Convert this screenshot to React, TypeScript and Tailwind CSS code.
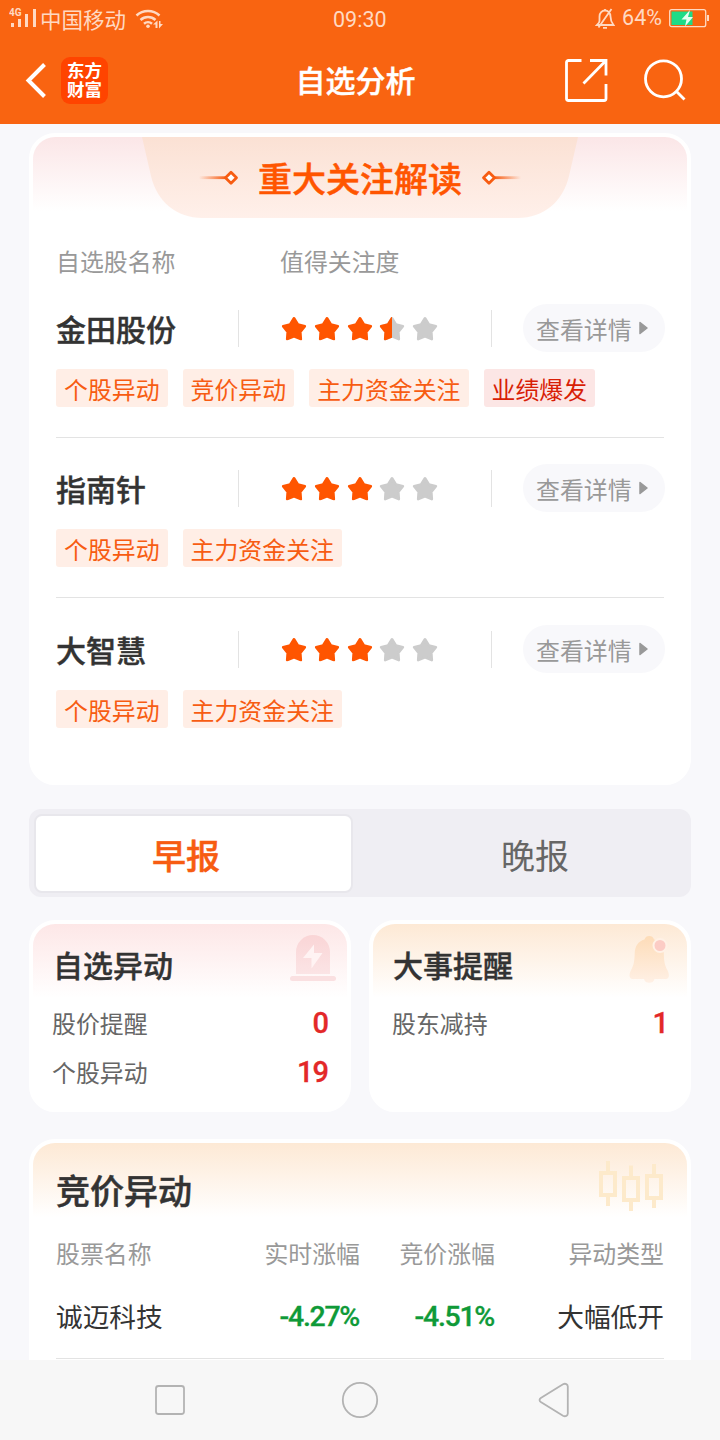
interface Stock {
  name: string;
  score: number;
  tags: { label: string; hot?: boolean }[];
}

const stocks: Stock[] = [
  {
    name: "金田股份",
    score: 3.5,
    tags: [
      { label: "个股异动" },
      { label: "竞价异动" },
      { label: "主力资金关注" },
      { label: "业绩爆发", hot: true },
    ],
  },
  { name: "指南针", score: 3, tags: [{ label: "个股异动" }, { label: "主力资金关注" }] },
  { name: "大智慧", score: 3, tags: [{ label: "个股异动" }, { label: "主力资金关注" }] },
];

const STAR =
  "M13 2.300L16.900 8.500 23.900 10.200 19.300 15.800 19.800 23.100 13 20.400 6.200 23.100 6.700 15.800 2.100 10.200 9.100 8.500z";

function Star({ fill }: { fill: number }) {
  return (
    <svg width="26" height="26" viewBox="0 0 26 26">
      {fill < 1 && <path d={STAR} fill="#cccccc" stroke="#cccccc" strokeWidth="2.600" strokeLinejoin="round" />}
      {fill > 0 && (
        <g style={{ clipPath: `inset(0 ${(1 - fill) * 100}% 0 0)` }}>
          <path d={STAR} fill="#ff5500" stroke="#ff5500" strokeWidth="2.600" strokeLinejoin="round" />
        </g>
      )}
    </svg>
  );
}

function StatusBar() {
  return (
    <div className="flex h-[38px] items-center pl-[9px] pr-[11px] text-[#ffd9c2]">
      <svg className="-translate-y-px" width="28" height="20" viewBox="0 0 28 20" fill="currentColor">
        <text x="0" y="8" fontSize="10" fontWeight="700" fontFamily="Roboto, sans-serif">
          4G
        </text>
        <rect x="2" y="15" width="3" height="4" />
        <rect x="9" y="11" width="3" height="8" />
        <rect x="16" y="6" width="3" height="13" />
        <rect x="24" y="1" width="3" height="18" />
      </svg>
      <span className="ml-[3px] pt-[3px] text-[21.5px] leading-none">中国移动</span>
      <svg className="ml-[9px]" width="29" height="20" viewBox="0 0 29 20" fill="none" stroke="currentColor" strokeWidth="2.500">
        <path d="M1.500 6.500a17 17 0 0 1 23 0" />
        <path d="M5.500 11a11 11 0 0 1 15 0" />
        <path d="M9 14.800a6 6 0 0 1 8 0" />
        <circle cx="13" cy="17.300" r="1.800" fill="currentColor" stroke="none" />
        <path d="M18 15.500L22.500 11.500V19H20.500V15.500zM24 12H25.500V15H28L24 19.500z" fill="currentColor" stroke="none" />
      </svg>
      <span className="ml-[169px] pt-[1px] text-[21.5px] leading-none">09:30</span>
      <div className="-mt-[2px] ml-auto flex items-center">
        <svg width="20" height="21" viewBox="0 0 20 21" fill="none" stroke="currentColor" strokeWidth="1.800">
          <path d="M4.500 13V8.500C4.500 5 7 2.500 10 2.500s5.500 2.500 5.500 6c0 4 1 6 3 8.500H2c1.500-1.500 2.500-2.500 2.500-4M8 19.800h4M10 1v2M16.500 1L3.500 19.500" />
        </svg>
        <span className="ml-[7px] text-[21.5px] leading-none">64%</span>
        <svg className="ml-[7px]" width="40" height="20" viewBox="0 0 40 20">
          <rect x=".7" y="1.700" width="36" height="17" rx="2" fill="none" stroke="currentColor" strokeWidth="1.300" />
          <rect x="2.500" y="3.500" width="21" height="13.500" fill="#1edb87" />
          <path d="M21 2l-8.500 9.500h5L16 18.500l8-9.500h-5z" fill="#e6fff2" />
          <rect x="38" y="7" width="2" height="6" fill="currentColor" />
        </svg>
      </div>
    </div>
  );
}

function NavBar() {
  return (
    <div className="grid h-[84px] grid-cols-[1fr_auto_1fr] items-center pl-[24px] pr-[33px] text-white">
      <div className="flex items-center">
        <svg width="24" height="38" viewBox="0 0 24 38" fill="none" stroke="currentColor" strokeWidth="4">
          <path d="M20.500 3.500L4.500 19.500l16 16" />
        </svg>
        <div className="ml-[13px] flex h-[47px] w-[47px] flex-col items-center justify-center rounded-[9px] bg-[#ff4400] pt-[2px] text-[17.500px] font-bold leading-[19px]">
          <span>东方</span>
          <span>财富</span>
        </div>
      </div>
      <h1 className="pt-[4px] text-[30px] font-medium leading-none [-webkit-text-stroke:0.4px]">自选分析</h1>
      <div className="flex items-center justify-end">
        <svg width="44" height="44" viewBox="0 0 44 44" fill="none" stroke="currentColor" strokeWidth="2.800">
          <path d="M17.500 2.500H4.500a2 2 0 0 0-2 2v36a2 2 0 0 0 2 2h35.500a2 2 0 0 0 2-2V26M26 2.500h16V17.500M41.500 3L19.500 25.500" />
        </svg>
        <svg className="ml-[35px]" width="44" height="44" viewBox="0 0 44 44" fill="none" stroke="currentColor" strokeWidth="2.800">
          <circle cx="20.500" cy="20.800" r="18" />
          <path d="M33.500 33.500l8 8" />
        </svg>
      </div>
    </div>
  );
}

function Ornament({ flip }: { flip?: boolean }) {
  return (
    <svg className={flip ? "-scale-x-100" : ""} width="40" height="16" viewBox="0 0 40 16">
      <defs>
        <linearGradient id="tail" x1="0" x2="1">
          <stop offset="0" stopColor="#f75c12" stopOpacity="0" />
          <stop offset="1" stopColor="#f75c12" />
        </linearGradient>
      </defs>
      <rect x="0" y="6.300" width="27" height="2.800" fill="url(#tail)" />
      <path d="M32 2.200L37.500 7.700 32 13.200 26.500 7.700z" fill="#fff" stroke="#f75c12" strokeWidth="2.800" strokeLinejoin="round" />
    </svg>
  );
}

function FocusCard() {
  return (
    <section className="h-[652px] rounded-[26px] border-4 border-white bg-white">
      <div className="h-[81px] rounded-t-[22px] bg-linear-to-b from-[#fbe6e7] to-white to-[74px]">
        <div className="relative mx-auto h-[81px] w-[436px]">
          <svg className="absolute inset-0" width="436" height="81" viewBox="0 0 436 81">
            <defs>
              <linearGradient id="banner" x1="0" y1="0" x2="0" y2="1">
                <stop offset="0" stopColor="#fbe1d4" />
                <stop offset="1" stopColor="#fff0ea" />
              </linearGradient>
            </defs>
            <path d="M0 0H436L427 39C421 65 401 81 376 81H60C35 81 15 65 9 39Z" fill="url(#banner)" />
          </svg>
          <div className="relative flex h-[81px] items-center justify-center gap-[19px]">
            <Ornament />
            <h2 className="pt-[5px] text-[34px] font-medium leading-none text-[#ff5500] [-webkit-text-stroke:0.5px]">重大关注解读</h2>
            <Ornament flip />
          </div>
        </div>
      </div>
      <div className="px-[23px]">
        <div className="flex h-[86px] items-center pt-[6px] text-[23.900px] text-[#999999]">
          <span className="w-[224px]">自选股名称</span>
          <span>值得关注度</span>
        </div>
        {stocks.map((stock) => (
          <div key={stock.name} className="mb-[27px] h-[134px] border-b border-[#e3e3e3] last:border-0 nth-2:mb-[26px]">
            <div className="-mr-px flex h-12 items-center">
              <span className="w-[182px] pt-[5px] text-[30px] font-medium leading-none text-[#333333] [-webkit-text-stroke:0.4px]">
                {stock.name}
              </span>
              <div className="h-[37px] w-px bg-[#e3e3e3]" />
              <div className="ml-[42px] flex w-[210px] gap-[6.800px] pt-[2px]">
                {[0, 1, 2, 3, 4].map((i) => (
                  <Star key={i} fill={Math.min(1, Math.max(0, stock.score - i))} />
                ))}
              </div>
              <div className="h-[37px] w-px bg-[#e3e3e3]" />
              <button className="ml-auto flex h-12 w-[142px] items-center rounded-full bg-[#f8f8fb] pl-[13px] text-[23.900px] text-[#999999]">
                <span className="pt-[7px]">查看详情</span>
                <svg className="ml-[7px]" width="9" height="14" viewBox="0 0 9 14">
                  <path d="M1 1.500L8 7 1 12.500z" fill="#999" stroke="#999" strokeWidth="1.500" strokeLinejoin="round" />
                </svg>
              </button>
            </div>
            <div className="mt-[17px] flex gap-[15px]">
              {stock.tags.map((tag) => (
                <span
                  key={tag.label}
                  className={`h-[38px] rounded-[3px] px-2 text-[23.900px] leading-[45px] ${
                    tag.hot ? "bg-[#fce6e5] text-[#d81e06]" : "bg-[#ffeee6] text-[#f75c12]"
                  }`}
                >
                  {tag.label}
                </span>
              ))}
            </div>
          </div>
        ))}
      </div>
    </section>
  );
}

function Tabs() {
  return (
    <div className="mt-6 flex h-[88px] rounded-[12px] bg-[#efeef3] p-[6px] text-[34px]">
      <button className="-ml-px -mt-px h-[79px] w-[319px] rounded-[8px] border-2 border-[#e8e7ec] bg-white pr-[15px] pt-[6px] font-medium leading-none text-[#f75c12] [-webkit-text-stroke:0.5px]">
        早报
      </button>
      <button className="flex-1 pl-[32px] pt-[8px] leading-none text-[#666666]">晚报</button>
    </div>
  );
}

function SirenIcon() {
  return (
    <svg className="translate-x-[2px]" width="46" height="48" viewBox="0 0 46 48">
      <defs>
        <linearGradient id="siren" x1="0" y1="0" x2="0" y2="1">
          <stop offset="0" stopColor="#fad5d6" />
          <stop offset="1" stopColor="#fbe4e5" />
        </linearGradient>
      </defs>
      <path d="M6 39V17a17 17 0 0 1 34 0v22z" fill="url(#siren)" />
      <rect x="0" y="41" width="46" height="5" rx="2.500" fill="#fae0e1" />
      <path d="M24 9.500L13 23h8.500V33.500L32.500 18H24z" fill="#fff3f3" />
    </svg>
  );
}

function BellIcon() {
  return (
    <svg className="-translate-x-[4px]" width="41" height="50" viewBox="0 0 41 50">
      <defs>
        <linearGradient id="bell" x1="0" y1="0" x2="0" y2="1">
          <stop offset="0" stopColor="#fddcb8" />
          <stop offset="1" stopColor="#fff0e5" />
        </linearGradient>
      </defs>
      <path
        d="M15.500 4.500a5 5 0 0 1 9.500 0c6.500 2 9.500 6.500 9.800 14 .2 8 .9 12 3.800 17 2 4 1.800 8.500-1.800 8.500H25.500a5.500 5.500 0 0 1-10.500 0H3.500C0 44-.2 39.500 1.800 35.500 4.700 30.500 5.500 26.500 5.700 18.500 6 11 9 6.500 15.500 4.500z"
        fill="url(#bell)"
      />
      <circle cx="31" cy="10.500" r="6.500" fill="#fcccc5" stroke="#fff1e6" strokeWidth="2" />
    </svg>
  );
}

function CandlesIcon() {
  return (
    <svg className="-translate-y-px" width="66" height="52" viewBox="0 0 66 52" fill="none" stroke="#fdeacb" strokeWidth="4">
      <rect x="3" y="13" width="14" height="22" />
      <path d="M10 1v11M10 36v10" />
      <rect x="26" y="18" width="14" height="22" />
      <path d="M33 5.500V17M33 41v10" />
      <rect x="49" y="16" width="14" height="22" />
      <path d="M56 4v11M56 39v9" />
    </svg>
  );
}

interface SummaryCardProps {
  title: string;
  tint: string;
  icon: React.ReactNode;
  rows: [string, string][];
}

function SummaryCard({ title, tint, icon, rows }: SummaryCardProps) {
  return (
    <section className="h-[192px] flex-1 rounded-[26px] border-4 border-white bg-white">
      <div className={`h-full rounded-[22px] bg-linear-to-b ${tint} to-white to-[74px] pl-[19px] pr-[19px]`}>
        <div className="-mr-[6px] flex h-[74px] items-start justify-between pt-[11px]">
          <h3 className="pl-px pt-[17px] text-[30px] font-medium leading-none text-[#333333] [-webkit-text-stroke:0.4px]">{title}</h3>
          {icon}
        </div>
        {rows.map(([label, count]) => (
          <div key={label} className="flex h-[49px] items-center justify-between">
            <span className="pt-[7px] text-[23.900px] leading-none text-[#666666]">{label}</span>
            <span className="pt-[2px] text-[29px] font-medium leading-none tracking-[-1px] text-[#e32828] [-webkit-text-stroke:0.3px]">
              {count}
            </span>
          </div>
        ))}
      </div>
    </section>
  );
}

function AuctionCard() {
  return (
    <section className="mt-[27px] h-[260px] rounded-[26px] border-4 border-white bg-white">
      <div className="rounded-t-[22px] bg-linear-to-b from-[#fde9d5] to-white to-[74px] px-[23px]">
        <div className="flex h-[86px] items-start justify-between pt-[18px]">
          <h3 className="pt-[14px] text-[34px] font-medium leading-none text-[#333333] [-webkit-text-stroke:0.5px]">竞价异动</h3>
          <CandlesIcon />
        </div>
        <div className="grid grid-cols-[168px_136px_135px_1fr] pt-[15px] text-right text-[23.900px] leading-none text-[#999999]">
          <span className="text-left">股票名称</span>
          <span>实时涨幅</span>
          <span>竞价涨幅</span>
          <span>异动类型</span>
        </div>
        <div className="mt-[20px] grid h-[71px] grid-cols-[168px_136px_135px_1fr] items-center border-b border-[#e3e3e3] pb-[9px] text-right text-[26.700px] leading-none text-[#333333]">
          <span className="text-left">诚迈科技</span>
          <span className="-mt-[3px] pr-px text-[28.500px] font-medium tracking-[-1.300px] text-[#0f9a38] [-webkit-text-stroke:0.3px]">-4.27%</span>
          <span className="-mt-[3px] pr-px text-[28.500px] font-medium tracking-[-1.300px] text-[#0f9a38] [-webkit-text-stroke:0.3px]">-4.51%</span>
          <span>大幅低开</span>
        </div>
      </div>
    </section>
  );
}

export default function App() {
  return (
    <div className="flex h-[1440px] w-[720px] flex-col overflow-hidden bg-[#f8f8fb] font-[Roboto,'Noto_Sans_CJK_SC',sans-serif]">
      <header className="h-[124px] shrink-0 bg-[#f96411]">
        <StatusBar />
        <NavBar />
      </header>

      <main className="h-[1236px] shrink-0 overflow-hidden px-[29px] pt-[9px]">
        <FocusCard />
        <Tabs />
        <div className="mt-[23px] flex gap-[18px]">
          <SummaryCard
            title="自选异动"
            tint="from-[#fde7e7]"
            icon={<SirenIcon />}
            rows={[
              ["股价提醒", "0"],
              ["个股异动", "19"],
            ]}
          />
          <SummaryCard title="大事提醒" tint="from-[#fde9d5]" icon={<BellIcon />} rows={[["股东减持", "1"]]} />
        </div>
        <AuctionCard />
      </main>

      {/* system navigation */}
      <footer className="flex h-20 shrink-0 items-center bg-[#f7f7f7] pl-[154px]">
        <svg width="32" height="32" viewBox="0 0 32 32" fill="none" stroke="#b3b3b3" strokeWidth="1.800">
          <rect x="2" y="2" width="28" height="28" rx="2.500" />
        </svg>
        <svg className="ml-[155px]" width="38" height="38" viewBox="0 0 38 38" fill="none" stroke="#b3b3b3" strokeWidth="1.800">
          <circle cx="19" cy="19" r="17.200" />
        </svg>
        <svg className="ml-[158px]" width="34" height="36" viewBox="0 0 34 36" fill="none" stroke="#b3b3b3" strokeWidth="1.800">
          <path d="M3.800 16L26 2.300c2.500-1.300 4.800 0 4.800 2.200v27c0 2.200-2.300 3.500-4.800 2.200L3.800 20c-1.700-1.200-1.700-2.800 0-4z" />
        </svg>
      </footer>
    </div>
  );
}
